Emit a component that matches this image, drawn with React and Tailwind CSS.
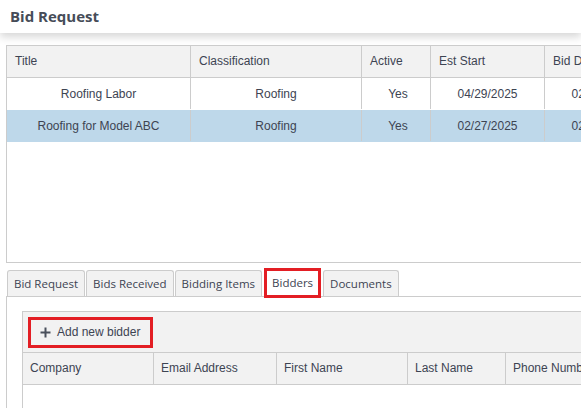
import React from "react";

const cell = "border-r border-[#cccccc] flex items-center shrink-0";

export default function App() {
  const cols = [
    { t: "Title", w: "w-[184px]" },
    { t: "Classification", w: "w-[171px]" },
    { t: "Active", w: "w-[69px]" },
    { t: "Est Start", w: "w-[114px]" },
    { t: "Bid Date", w: "w-[114px]" },
  ];
  const rows = [
    ["Roofing Labor", "Roofing", "Yes", "04/29/2025", "02/15/2025"],
    ["Roofing for Model ABC", "Roofing", "Yes", "02/27/2025", "02/10/2025"],
  ];
  const bcols = [
    { t: "Company", w: "w-[131px]" },
    { t: "Email Address", w: "w-[123px]" },
    { t: "First Name", w: "w-[131px]" },
    { t: "Last Name", w: "w-[98px]" },
    { t: "Phone Number", w: "w-[110px]" },
  ];
  const tabs = ["Bid Request", "Bids Received", "Bidding Items", "Bidders", "Documents"];
  return (
    <div className="w-[581px] h-[408px] overflow-hidden bg-white relative text-[#3d4452]" style={{ fontFamily: "'Liberation Sans', Arial, sans-serif" }}>
      <div className="h-[33px] flex items-center pl-[10px] pb-[1px] shadow-[0_4px_8px_rgba(0,0,0,0.16)] relative z-10 bg-white">
        <span className="text-[15px] font-bold text-[#464c58]" style={{ fontFamily: "'Open Sans', sans-serif" }}>Bid Request</span>
      </div>
      <div className="pl-[6px] pt-[12px]">
        <div className="w-[640px] h-[218px] border border-[#cccccc] flex flex-col text-[12px]">
          <div className="flex h-[32px] bg-[#f2f2f2] border-b border-[#cccccc]">
            {cols.map((c, i) => (
              <div key={i} className={`${cell} ${c.w} pl-[8px] pb-[1px]`}>{c.t}</div>
            ))}
          </div>
          {rows.map((r, ri) => (
            <div key={ri} className={`flex h-[32px] pb-[1px] ${ri === 1 ? "bg-[#bed8ea]" : "bg-white"}`}>
              {r.map((v, i) => (
                <div key={i} className={`${cell} ${cols[i].w} justify-center ${i === 2 ? "pl-[4px]" : ""}`}>{v}</div>
              ))}
            </div>
          ))}
        </div>
      </div>
      <div className="pl-[6px] pt-[7px]">
        <div className="flex items-end h-[26px] pl-[1px] gap-[1px] relative z-10" style={{ fontFamily: "'Open Sans', sans-serif" }}>
          {tabs.map((t, i) =>
            t === "Bidders" ? (
              <div key={i} className="h-[30px] mx-[1px] -mb-[2px] border-[3px] border-[#e31e24] bg-white px-[5px] flex items-center text-[11.5px] text-[#3d4452]">{t}</div>
            ) : (
              <div key={i} className="h-[26px] border border-[#cccccc] border-b-0 rounded-t-[3px] bg-[#f2f2f2] px-[6px] flex items-center text-[11.5px] text-[#3d4452]">{t}</div>
            )
          )}
        </div>
        <div className="border-l border-t border-[#cccccc] pl-[15px] pt-[14px] h-[120px]">
          <div className="border-l border-t border-[#cccccc] w-[640px] h-[110px] text-[12px]">
            <div className="h-[41px] bg-[#f2f2f2] flex items-center pl-[5px] border-b border-[#cccccc]">
              <div className="h-[31px] w-[125px] border-[3px] border-[#e31e24] flex items-center pl-[9px] gap-[6px]">
                <svg width="11" height="11" viewBox="0 0 11 11"><path d="M5.5 0.5v10M0.5 5.5h10" stroke="#4a505c" strokeWidth="2" /></svg>
                <span className="text-[12px]">Add new bidder</span>
              </div>
            </div>
            <div className="flex h-[32px] bg-[#f2f2f2] border-b border-[#cccccc]">
              {bcols.map((c, i) => (
                <div key={i} className={`${cell} ${c.w} pl-[7px] pb-[1px]`}>{c.t}</div>
              ))}
            </div>
          </div>
        </div>
      </div>
    </div>
  );
}
